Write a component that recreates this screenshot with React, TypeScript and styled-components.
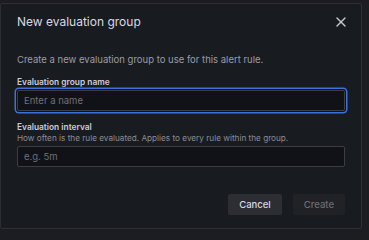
import React from 'react';
import styled, { createGlobalStyle } from 'styled-components';
import { X } from 'lucide-react';

const GlobalStyle = createGlobalStyle`
  html, body {
    margin: 0;
    padding: 0;
    background: #1c1d21;
    font-family: Inter, "Noto Sans", sans-serif;
    overflow: hidden;
  }
`;

const Modal = styled.div`
  box-sizing: border-box;
  margin-top: 3px;
  width: 362px;
  height: 226px;
  background: #181b1f;
  border: 1px solid #2c2e33;
  border-radius: 2px;
  display: flex;
  flex-direction: column;
`;

const Header = styled.div`
  display: flex;
  align-items: center;
  justify-content: space-between;
  height: 36px;
  padding: 0 10px 0 16px;
`;

const Title = styled.h2`
  margin: 0;
  font-size: 12px;
  font-weight: 400;
  line-height: 16px;
  color: #d8d9e3;
`;

const CloseButton = styled.button`
  display: flex;
  align-items: center;
  justify-content: center;
  width: 20px;
  height: 20px;
  padding: 0;
  border: none;
  background: transparent;
  color: #c7c8d2;
  cursor: pointer;
`;

const Body = styled.div`
  display: flex;
  flex-direction: column;
  padding: 13px 16px 0 16px;
`;

const Intro = styled.p`
  margin: 0 0 9px;
  font-size: 9.5px;
  line-height: 14px;
  color: #9b9ca6;
`;

const Field = styled.div<{ $gap?: number }>`
  display: flex;
  flex-direction: column;
  margin-bottom: ${(p) => p.$gap ?? 0}px;
`;

const Label = styled.label`
  font-size: 8.4px;
  font-weight: 600;
  line-height: 12px;
  color: #ccccdc;
`;

const Hint = styled.span`
  font-size: 8.2px;
  line-height: 11px;
  color: #8c8d96;
`;

const Input = styled.input<{ $focused?: boolean }>`
  box-sizing: border-box;
  margin-top: 2px;
  width: 100%;
  height: 21px;
  padding: 0 6px;
  background: #111217;
  border: 1px solid #3b3d43;
  border-radius: 2px;
  font-family: inherit;
  font-size: 9.5px;
  color: #ccccdc;
  outline: none;
  box-shadow: ${(p) => (p.$focused ? '0 0 0 1px #111217, 0 0 0 2.5px #3d71d9' : 'none')};

  &::placeholder {
    color: #6e7078;
  }
`;

const Footer = styled.div`
  display: flex;
  justify-content: flex-end;
  gap: 11px;
  margin-top: 27px;
`;

const Button = styled.button<{ $disabled?: boolean }>`
  height: 21px;
  padding: 0 11px;
  border: none;
  border-radius: 2px;
  font-family: inherit;
  font-size: 9.5px;
  font-weight: 500;
  background: ${(p) => (p.$disabled ? '#202226' : '#2c2e33')};
  color: ${(p) => (p.$disabled ? '#6c6d73' : '#d8d9e3')};
  cursor: ${(p) => (p.$disabled ? 'not-allowed' : 'pointer')};
`;

export default function App() {
  return (
    <>
      <GlobalStyle />
      <Modal role="dialog">
        <Header>
          <Title>New evaluation group</Title>
          <CloseButton aria-label="Close">
            <X size={16} strokeWidth={2} />
          </CloseButton>
        </Header>
        <Body>
          <Intro>Create a new evaluation group to use for this alert rule.</Intro>
          <Field $gap={10}>
            <Label>Evaluation group name</Label>
            <Input $focused placeholder="Enter a name" />
          </Field>
          <Field>
            <Label>Evaluation interval</Label>
            <Hint>How often is the rule evaluated. Applies to every rule within the group.</Hint>
            <Input placeholder="e.g. 5m" />
          </Field>
          <Footer>
            <Button>Cancel</Button>
            <Button $disabled disabled>Create</Button>
          </Footer>
        </Body>
      </Modal>
    </>
  );
}
